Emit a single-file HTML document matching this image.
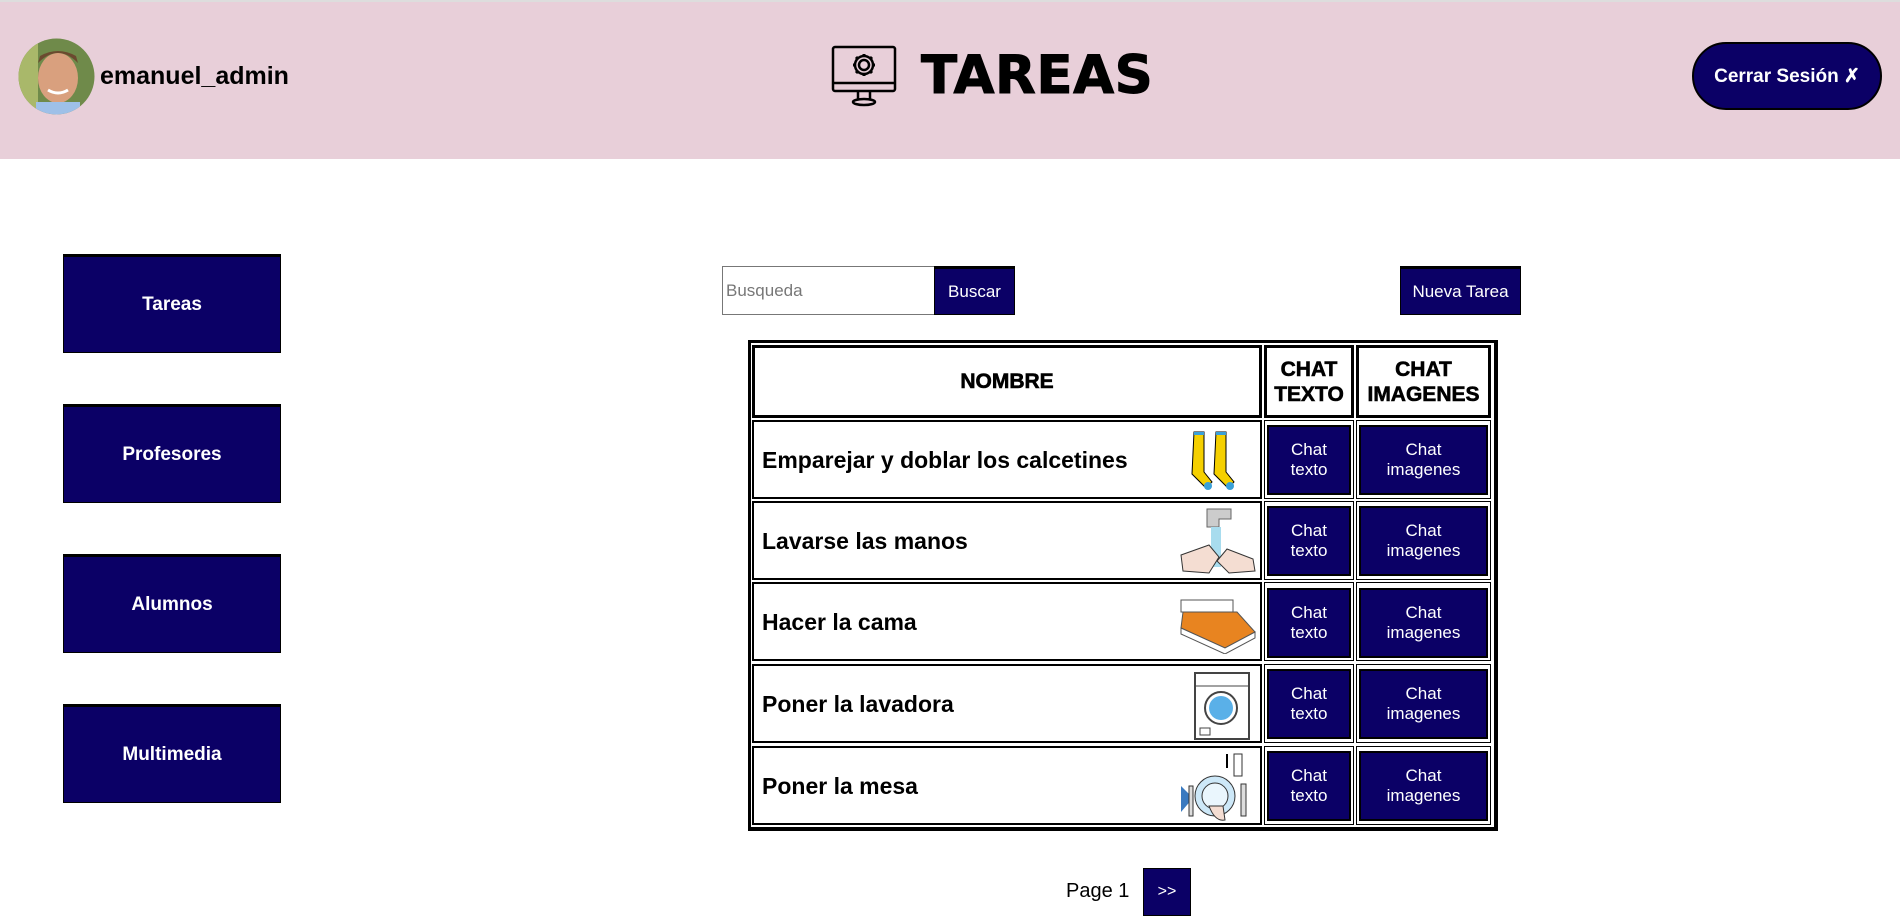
<!DOCTYPE html>
<html><head><meta charset="utf-8"><style>
*{box-sizing:border-box;margin:0;padding:0}
body{width:1900px;height:922px;background:#fff;font-family:"Liberation Sans",Arial,sans-serif;position:relative;overflow:hidden}
.hdr{position:absolute;left:0;top:0;width:1900px;height:159px;background:#e8cfd9;border-top:2px solid #ddd}
.ab{position:absolute}
.nav{position:absolute;left:63px;width:218px;height:99px;background:#0b0066;border:1px solid #000;border-top:3px solid #000;color:#fff;font-weight:bold;font-size:19px;display:flex;align-items:center;justify-content:center}
.btn{position:absolute;background:#0b0066;color:#fff;font-size:17px;display:flex;align-items:center;justify-content:center;border:1px solid #000;border-top:3px solid #000}
.cell{position:absolute;background:#fff;border:2px solid #000}
.cb{position:absolute;background:#0b0066;border:2px solid #000;color:#fff;font-size:17px;text-align:center;line-height:20px;display:flex;align-items:center;justify-content:center}
.nm{position:absolute;left:8px;font-weight:bold;font-size:23px;top:25px}
.hc{font-weight:bold;font-size:21px;-webkit-text-stroke:0.6px #000}
</style></head><body>
<div class="hdr"></div>
<svg class="ab" style="left:18px;top:38px" width="77" height="77" viewBox="0 0 77 77">
<defs><clipPath id="c"><circle cx="38.5" cy="38.5" r="38"/></clipPath></defs>
<g clip-path="url(#c)"><rect width="77" height="77" fill="#6f8a4a"/><rect x="0" y="0" width="20" height="77" fill="#a9b86a"/><ellipse cx="40" cy="40" rx="20" ry="25" fill="#d9a07e"/><path d="M20 25 Q40 5 60 25 L58 18 Q40 8 22 18Z" fill="#6b4a2f"/><rect x="18" y="64" width="44" height="20" fill="#9ec0e8"/><path d="M30 52 Q40 58 50 52" stroke="#fff" stroke-width="3" fill="none"/></g></svg>
<div class="ab" style="left:100px;top:62px;font-size:25px;font-weight:bold">emanuel_admin</div>
<svg class="ab" style="left:831px;top:45px" width="66" height="62" viewBox="0 0 66 62" fill="none" stroke="#000" stroke-width="2.5">
<rect x="2" y="2" width="62" height="44" rx="2"/><line x1="2" y1="38" x2="64" y2="38"/><path d="M27 46 L27 54 M39 46 L39 54"/><ellipse cx="33" cy="57" rx="11" ry="3"/>
<circle cx="33" cy="20" r="5"/><path d="M33 9 v3 M33 28 v3 M22 20 h3 M41 20 h3 M25 12 l2 2 M39 26 l2 2 M25 28 l2 -2 M39 14 l2 -2" stroke-width="3"/><circle cx="33" cy="20" r="9"/></svg>
<div class="ab" style="left:921px;top:46px;font-family:'DejaVu Sans',sans-serif;font-weight:bold;font-size:53px;line-height:60px;letter-spacing:0.5px;-webkit-text-stroke:1px #000">TAREAS</div>
<div class="ab" style="left:1692px;top:42px;width:190px;height:68px;border-radius:34px;background:#0b0066;border:2px solid #000;color:#fff;font-weight:bold;font-size:19px;display:flex;align-items:center;justify-content:center">Cerrar Sesión ✗</div>

<div class="nav" style="top:254px">Tareas</div>
<div class="nav" style="top:404px">Profesores</div>
<div class="nav" style="top:554px">Alumnos</div>
<div class="nav" style="top:704px">Multimedia</div>

<div class="ab" style="left:722px;top:266px;width:213px;height:49px;border:1px solid #777;color:#777;font-size:17px;padding:14px 3px">Busqueda</div>
<div class="btn" style="left:934px;top:266px;width:81px;height:49px">Buscar</div>
<div class="btn" style="left:1400px;top:266px;width:121px;height:49px">Nueva Tarea</div>

<div class="ab" style="left:748px;top:340px;width:750px;height:491px;border:3px solid #000;border-right-width:4px;border-bottom-width:4px"></div>
<div class="cell hc" style="left:752px;top:345px;width:510px;height:73px;border-width:3px;display:flex;align-items:center;justify-content:center">NOMBRE</div>
<div class="cell hc" style="left:1264px;top:345px;width:90px;height:73px;border-width:3px;text-align:center;line-height:25px;padding-top:9px">CHAT<br>TEXTO</div>
<div class="cell hc" style="left:1356px;top:345px;width:135px;height:73px;border-width:3px;text-align:center;line-height:25px;padding-top:9px">CHAT<br>IMAGENES</div>

<div class="cell" style="left:752px;top:420px;width:510px;height:79px"><div class="nm">Emparejar y doblar los calcetines</div>
<svg class="ab" style="left:430px;top:8px" width="60" height="62" viewBox="0 0 60 62"><path d="M10 2h10v40l8 10-6 6-14-14z" fill="#f5d000" stroke="#000"/><path d="M32 2h10v40l8 10-6 6-14-14z" fill="#f5d000" stroke="#000"/><rect x="10" y="2" width="10" height="3" fill="#3aa0d8"/><rect x="32" y="2" width="10" height="3" fill="#3aa0d8"/><circle cx="24" cy="56" r="4" fill="#3aa0d8"/><circle cx="46" cy="56" r="4" fill="#3aa0d8"/></svg></div>
<div class="cell" style="left:752px;top:501px;width:510px;height:79px"><div class="nm">Lavarse las manos</div>
<svg class="ab" style="left:425px;top:4px" width="78" height="70" viewBox="0 0 78 70"><path d="M28 2h24v10h-12v8h-12z" fill="#ccc" stroke="#666"/><rect x="32" y="20" width="10" height="40" fill="#a8dcee"/><path d="M2 48 L30 38 L40 50 L30 66 L4 64z" fill="#f4ddd2" stroke="#333"/><path d="M76 64 L50 66 L38 54 L48 42 L74 52z" fill="#f4ddd2" stroke="#333"/></svg></div>
<div class="cell" style="left:752px;top:582px;width:510px;height:79px"><div class="nm">Hacer la cama</div>
<svg class="ab" style="left:425px;top:8px" width="78" height="62" viewBox="0 0 78 62"><path d="M2 8h52v12H2z" fill="#fff" stroke="#555"/><path d="M4 20h54l18 20-30 16-44-20z" fill="#e88420" stroke="#555"/><path d="M2 36l44 20 30-16v6l-30 16-44-20z" fill="#fff" stroke="#555"/></svg></div>
<div class="cell" style="left:752px;top:664px;width:510px;height:79px"><div class="nm">Poner la lavadora</div>
<svg class="ab" style="left:440px;top:6px" width="56" height="68" viewBox="0 0 56 68"><rect x="1" y="1" width="54" height="66" fill="#fff" stroke="#444" stroke-width="2"/><line x1="1" y1="14" x2="55" y2="14" stroke="#444"/><circle cx="27" cy="36" r="16" fill="#fff" stroke="#444" stroke-width="2"/><circle cx="27" cy="36" r="12" fill="#5ab0e8"/><rect x="6" y="56" width="10" height="7" fill="none" stroke="#444"/></svg></div>
<div class="cell" style="left:752px;top:746px;width:510px;height:79px"><div class="nm">Poner la mesa</div>
<svg class="ab" style="left:425px;top:2px" width="78" height="74" viewBox="0 0 78 74"><path d="M2 36l12 12-12 14z" fill="#3a7ac0"/><circle cx="36" cy="46" r="20" fill="#cde8f8" stroke="#333"/><circle cx="36" cy="46" r="13" fill="#eaf6fd" stroke="#333"/><rect x="55" y="4" width="8" height="22" fill="#fff" stroke="#333"/><path d="M48 4v14" stroke="#000" stroke-width="2"/><rect x="62" y="34" width="5" height="32" fill="#ddd" stroke="#333"/><rect x="10" y="36" width="4" height="30" fill="#ddd" stroke="#333"/><path d="M30 56 q6 16 16 14 l-2-14z" fill="#f4ddd2" stroke="#333"/></svg></div>

<div class="cell" style="left:1264px;top:420px;width:90px;height:79px;border-width:1px"></div><div class="cell" style="left:1356px;top:420px;width:135px;height:79px;border-width:1px"></div>
<div class="cell" style="left:1264px;top:501px;width:90px;height:79px;border-width:1px"></div><div class="cell" style="left:1356px;top:501px;width:135px;height:79px;border-width:1px"></div>
<div class="cell" style="left:1264px;top:582px;width:90px;height:79px;border-width:1px"></div><div class="cell" style="left:1356px;top:582px;width:135px;height:79px;border-width:1px"></div>
<div class="cell" style="left:1264px;top:664px;width:90px;height:79px;border-width:1px"></div><div class="cell" style="left:1356px;top:664px;width:135px;height:79px;border-width:1px"></div>
<div class="cell" style="left:1264px;top:746px;width:90px;height:79px;border-width:1px"></div><div class="cell" style="left:1356px;top:746px;width:135px;height:79px;border-width:1px"></div>

<div class="cb" style="left:1267px;top:425px;width:84px;height:70px">Chat<br>texto</div><div class="cb" style="left:1359px;top:425px;width:129px;height:70px">Chat<br>imagenes</div>
<div class="cb" style="left:1267px;top:506px;width:84px;height:70px">Chat<br>texto</div><div class="cb" style="left:1359px;top:506px;width:129px;height:70px">Chat<br>imagenes</div>
<div class="cb" style="left:1267px;top:588px;width:84px;height:70px">Chat<br>texto</div><div class="cb" style="left:1359px;top:588px;width:129px;height:70px">Chat<br>imagenes</div>
<div class="cb" style="left:1267px;top:669px;width:84px;height:70px">Chat<br>texto</div><div class="cb" style="left:1359px;top:669px;width:129px;height:70px">Chat<br>imagenes</div>
<div class="cb" style="left:1267px;top:751px;width:84px;height:70px">Chat<br>texto</div><div class="cb" style="left:1359px;top:751px;width:129px;height:70px">Chat<br>imagenes</div>

<div class="ab" style="left:1066px;top:880px;font-size:20px">Page 1</div>
<div class="btn" style="left:1143px;top:868px;width:48px;height:48px;font-size:16px;border-width:1px">&gt;&gt;</div>
</body></html>
